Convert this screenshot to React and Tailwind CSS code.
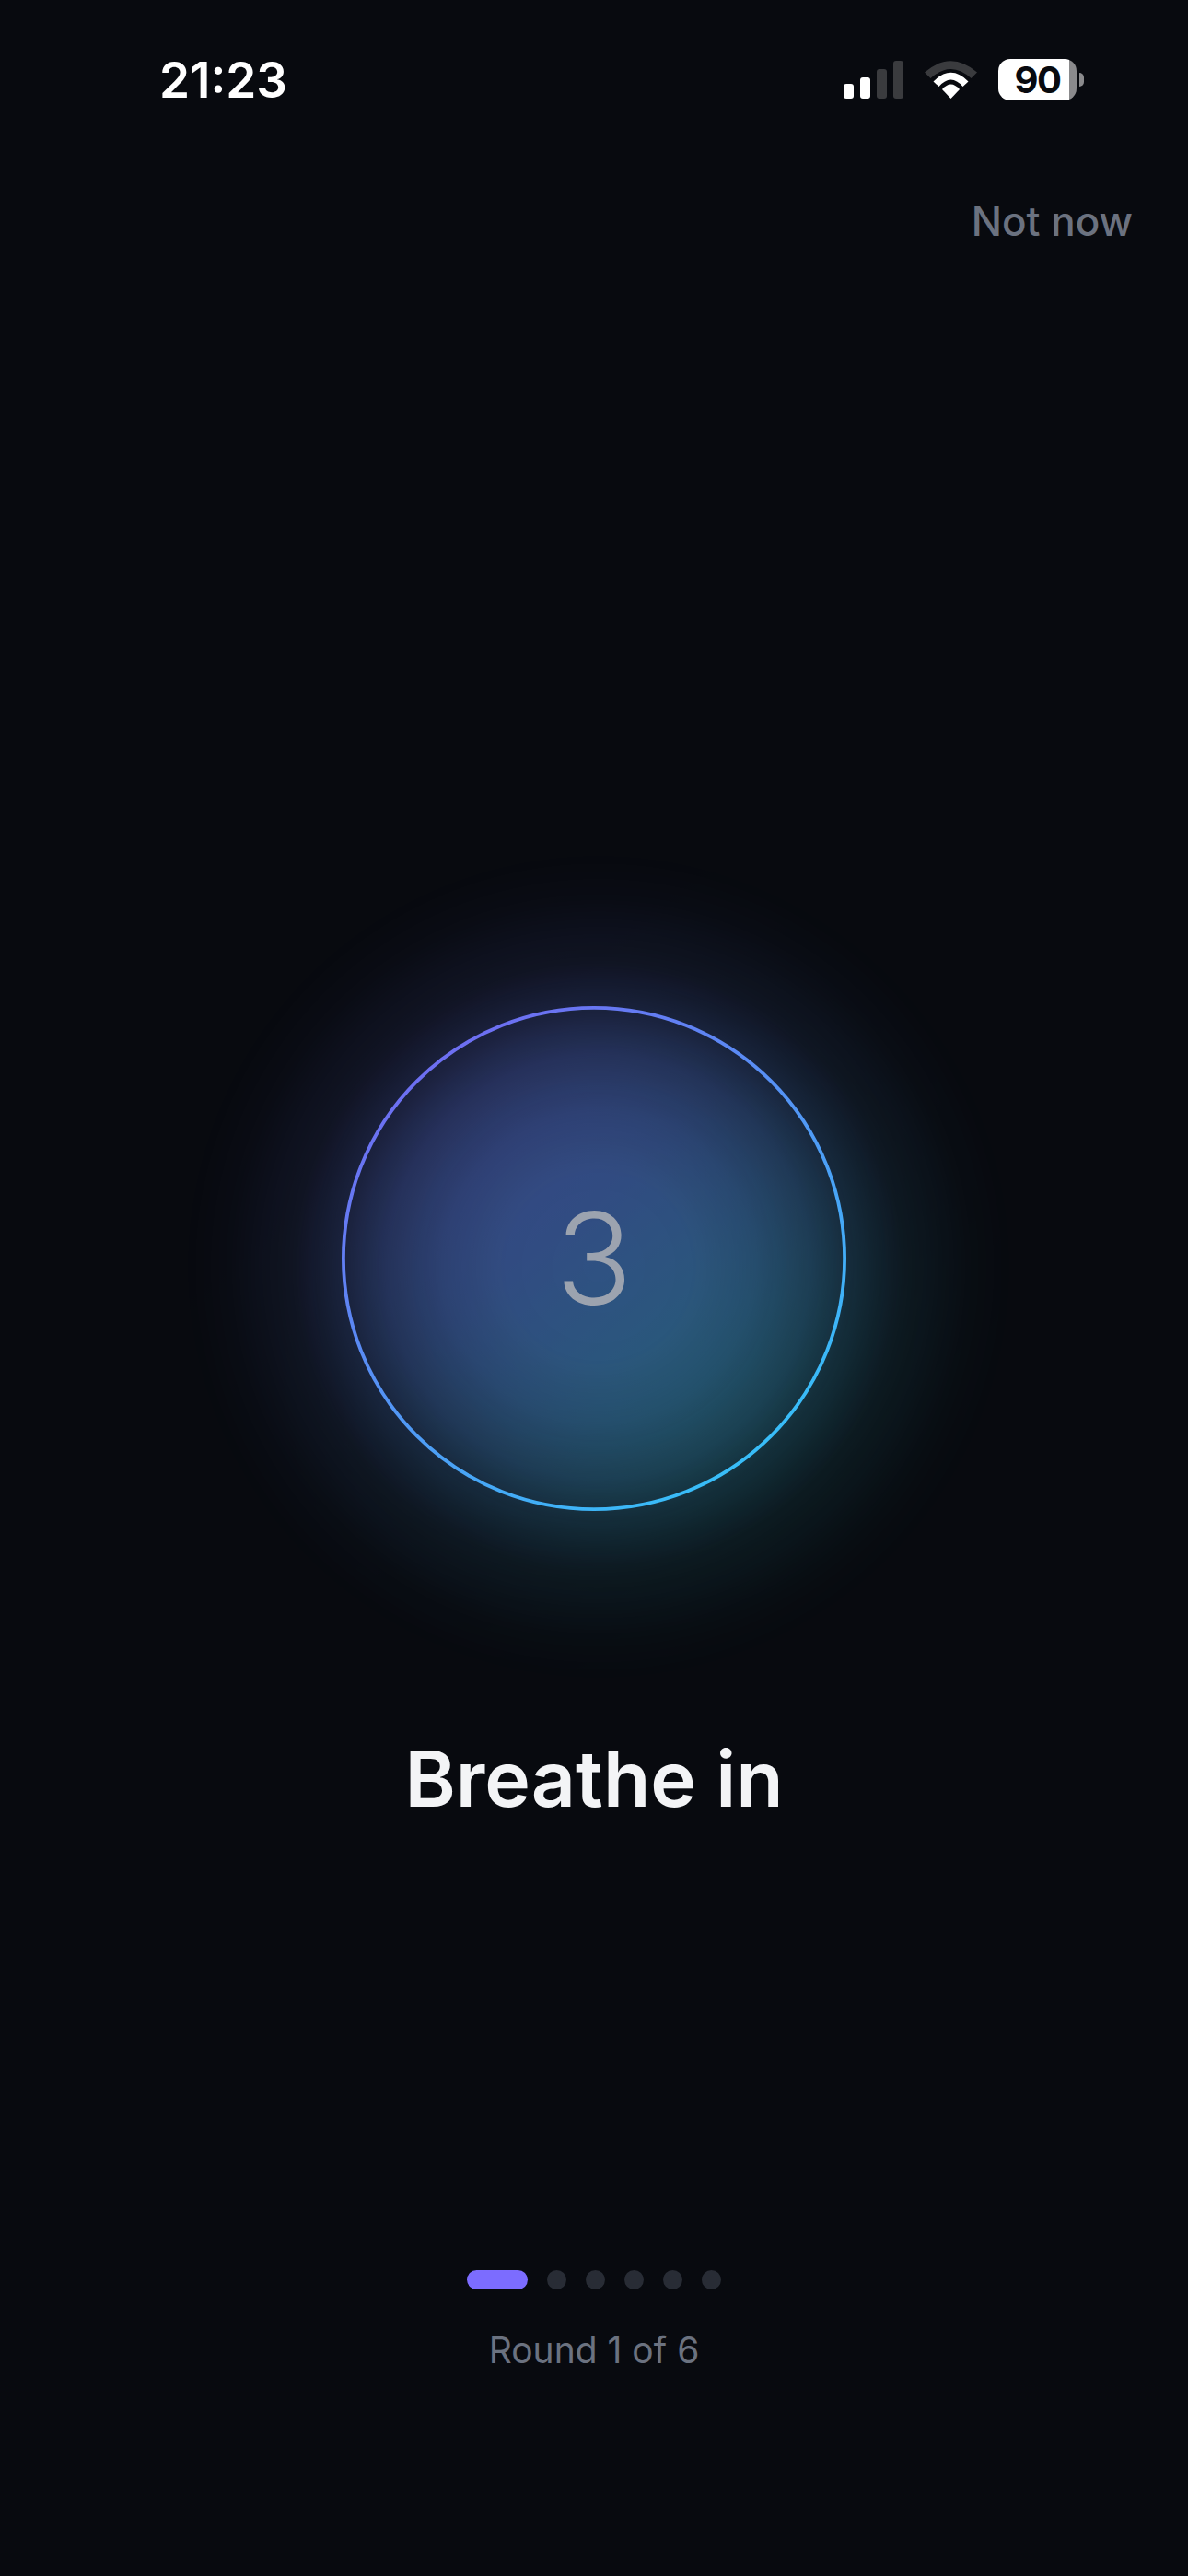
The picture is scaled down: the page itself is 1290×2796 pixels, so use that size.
import React from "react";

const font = { fontFamily: "Inter, 'Liberation Sans', sans-serif" };

function Signal() {
  return (
    <div className="flex items-end gap-[7px] h-[41px]">
      <div className="w-[11px] h-[16px] rounded-[3px] bg-white" />
      <div className="w-[11px] h-[23px] rounded-[3px] bg-white" />
      <div className="w-[11px] h-[32px] rounded-[3px] bg-[#3a3b3e]" />
      <div className="w-[11px] h-[41px] rounded-[3px] bg-[#3a3b3e]" />
    </div>
  );
}

function Wifi() {
  return (
    <svg width="57" height="41" viewBox="0 0 57 41" className="block">
      <path d="M0 12.5 Q28.5 -12 57 12.5 L50.5 19 Q28.5 -1 6.5 19 Z" fill="#3a3b3e" />
      <path d="M9.5 22.5 Q28.5 3 47.5 22.5 L41.5 28 Q28.5 13 15.5 28 Z" fill="#fff" />
      <path d="M19 31 Q28.5 20 38 31 L28.5 41 Z" fill="#fff" />
    </svg>
  );
}

function Battery() {
  return (
    <div className="flex items-center gap-[3px]">
      <div className="w-[85px] h-[45px] rounded-[13px] bg-[linear-gradient(90deg,#ffffff_91%,#8a8a8c_91%)] flex items-center justify-center">
        <span className="text-[40px] leading-none font-bold text-[#080a0f] tracking-[-1.5px]">90</span>
      </div>
      <div className="w-[5px] h-[15px] rounded-r-full bg-[#8a8a8c]" />
    </div>
  );
}

function Ring() {
  return (
    <svg width="548" height="548" viewBox="0 0 548 548" className="absolute inset-0">
      <defs>
        <linearGradient id="ringStroke" x1="0.2" y1="0.1" x2="0.8" y2="0.9">
          <stop offset="0" stopColor="#6d6ff2" />
          <stop offset="1" stopColor="#38bdf8" />
        </linearGradient>
      </defs>
      <circle cx="274" cy="274" r="272.1" fill="none" stroke="url(#ringStroke)" strokeWidth="3.8" />
    </svg>
  );
}

export default function App() {
  return (
    <div style={font} className="w-[1290px] h-[2796px] bg-[#080a0f] flex flex-col overflow-hidden">
      <header className="flex items-center justify-between h-[45px] mt-[64px] pl-[173px] pr-[113px]">
        <span className="text-[53px] leading-none font-semibold text-white pt-[2px]">21:23</span>
        <div className="flex items-center gap-[23px]">
          <Signal />
          <Wifi />
          <Battery />
        </div>
      </header>

      <div className="flex justify-end pr-[60px] mt-[106px]">
        <span className="text-[44px] leading-[50px] font-medium text-[#6b7280]">Not now</span>
      </div>

      <main className="flex flex-col items-center mt-[827px]">
        <div className="relative w-[548px] h-[548px] flex items-center justify-center">
          <div className="absolute left-[-171px] top-[-167px] w-[900px] h-[900px] bg-[linear-gradient(140deg,#7272ff_14%,#5a8cf0_45%,#30d0d0_85%)] [mask-image:radial-gradient(circle_450px_at_center,rgba(0,0,0,0.52)_0px,rgba(0,0,0,0.51)_100px,rgba(0,0,0,0.44)_170px,rgba(0,0,0,0.33)_230px,rgba(0,0,0,0.21)_273px,rgba(0,0,0,0.09)_330px,rgba(0,0,0,0.025)_400px,rgba(0,0,0,0)_450px)]" />
          <Ring />
          <span className="relative text-[138px] leading-none font-light text-[#9ca3af]">3</span>
        </div>

        <h1 className="mt-[241px] text-[84px] leading-[100px] font-semibold text-[#f3f4f6]">Breathe in</h1>

        <div className="flex items-center gap-[21px] mt-[483px]">
          <div className="w-[66px] h-[21px] rounded-full bg-[#7c6cff]" />
          <div className="w-[21px] h-[21px] rounded-full bg-[#282c35]" />
          <div className="w-[21px] h-[21px] rounded-full bg-[#282c35]" />
          <div className="w-[21px] h-[21px] rounded-full bg-[#282c35]" />
          <div className="w-[21px] h-[21px] rounded-full bg-[#282c35]" />
          <div className="w-[21px] h-[21px] rounded-full bg-[#282c35]" />
        </div>
        <p className="mt-[41px] text-[39px] leading-[50px] text-[#6b7280]">Round 1 of 6</p>
      </main>
    </div>
  );
}
